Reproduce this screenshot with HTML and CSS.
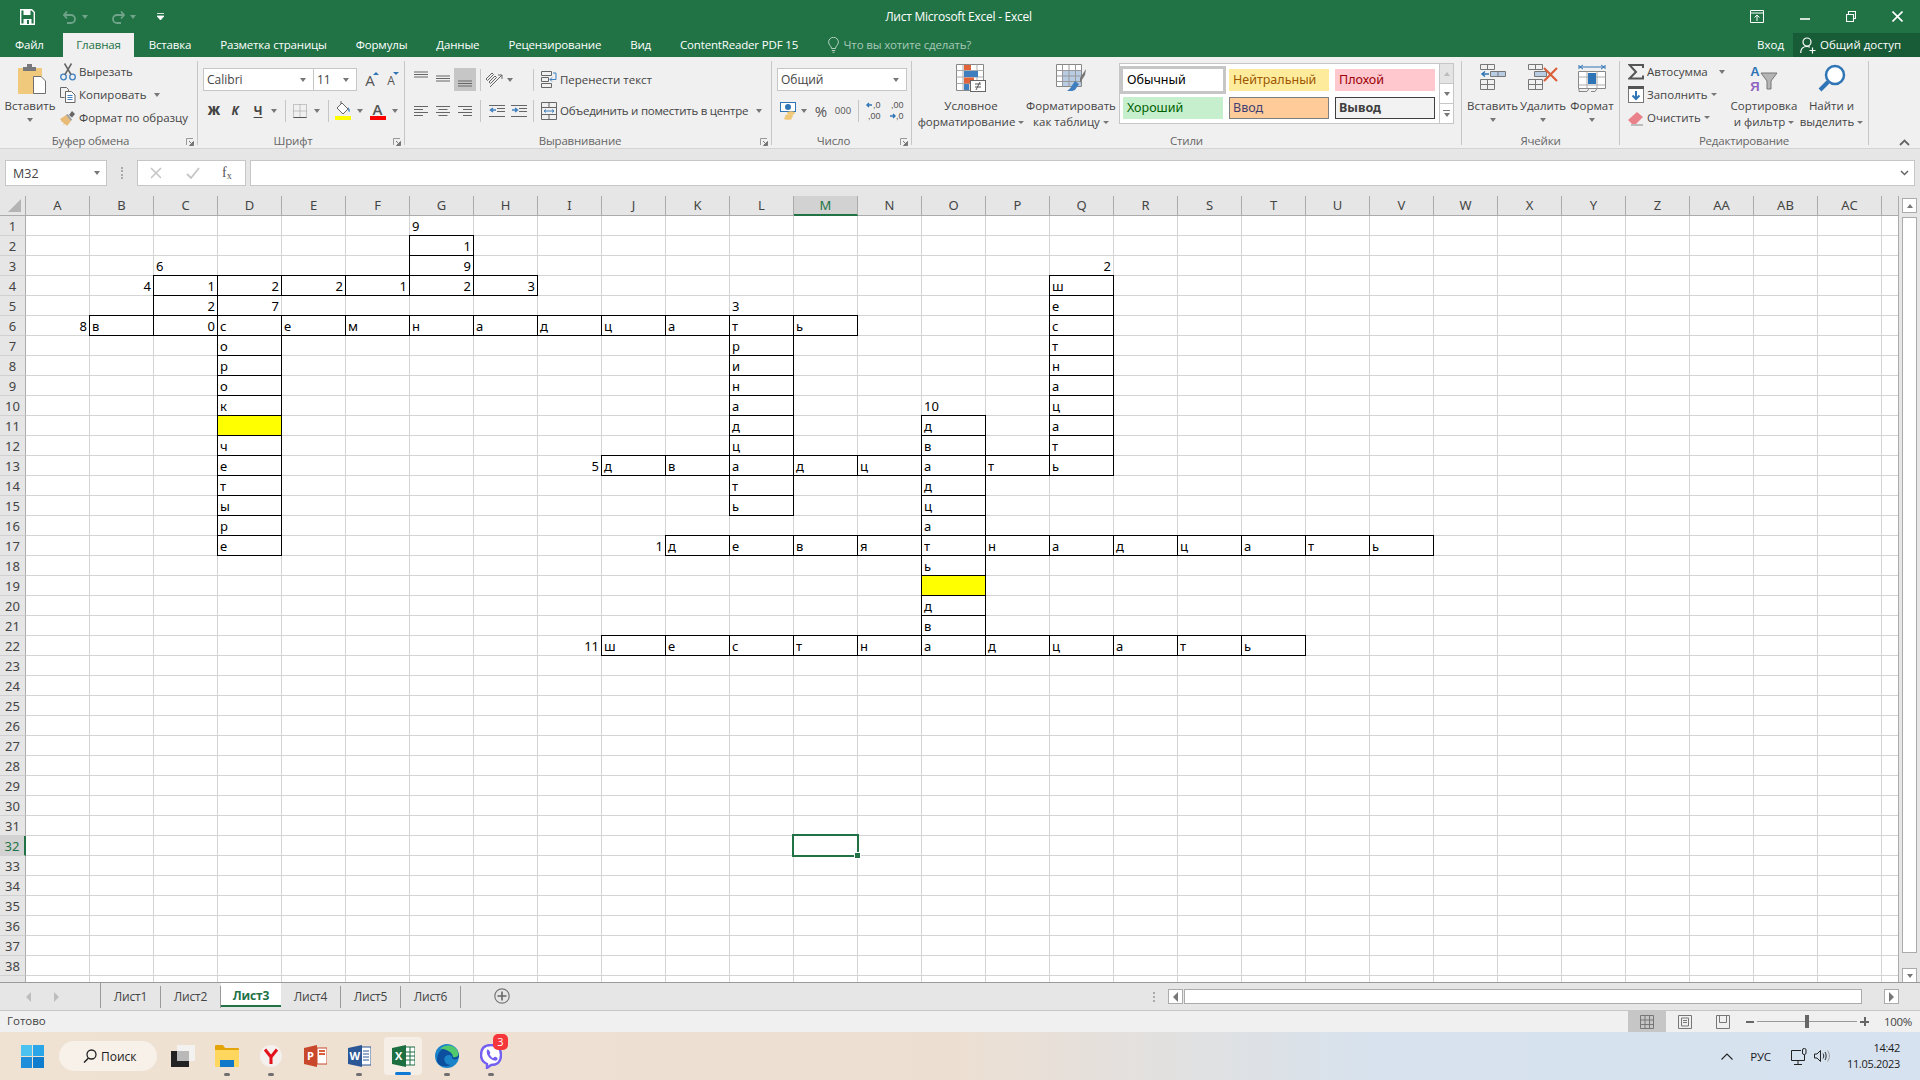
FILE: index.html
```html
<!DOCTYPE html>
<html lang="ru">
<head>
<meta charset="utf-8">
<title>Лист Microsoft Excel - Excel</title>
<link rel="stylesheet" href="styles.css">
</head>
<body>
<header class="titlebar">
  <div class="qat">
    <svg class="qat-save" width="15" height="16" viewBox="0 0 15 16"><path d="M.7.7h11l2.6 2.6v12H.7z" fill="none" stroke="#fff" stroke-width="1.4"/><rect x="3.5" y="1" width="7" height="5" fill="#fff"/><rect x="3.5" y="10" width="8" height="5" fill="#fff"/><rect x="7" y="11" width="2" height="4" fill="#217346"/></svg>
    <svg class="qat-undo" width="14" height="14" viewBox="0 0 14 14"><path d="M4 8.5 1 5l3-3.5M1.5 5H8a4 4 0 0 1 0 8H4" fill="none" stroke="#6fa48a" stroke-width="1.8"/></svg>
    <i class="caret dim"></i>
    <svg class="qat-redo" width="14" height="14" viewBox="0 0 14 14"><path d="M10 8.5 13 5l-3-3.5M12.5 5H6a4 4 0 0 0 0 8h4" fill="none" stroke="#6fa48a" stroke-width="1.8"/></svg>
    <i class="caret dim"></i>
    <svg class="qat-more" width="7" height="8" viewBox="0 0 7 8"><path d="M0 .5h7M0 3h7L3.500 7z" stroke="#fff" fill="#fff" stroke-width=".8"/></svg>
  </div>
  <div class="doc-title">Лист Microsoft Excel - Excel</div>
  <div class="win-buttons">
    <svg width="14" height="13" viewBox="0 0 14 13"><path d="M.5.500h13v12H.5zM.5 3h13M7 11V5.500M4.500 7.500 7 5l2.500 2.500" fill="none" stroke="#fff"/></svg>
    <svg width="10" height="10" viewBox="0 0 10 10"><path d="M0 7h10" stroke="#fff" stroke-width="1.600"/></svg>
    <svg width="10" height="11" viewBox="0 0 10 11"><path d="M.5 3.500h7v7h-7zM2.500 3V.5h7v7H8" fill="none" stroke="#fff" stroke-width="1.100"/></svg>
    <svg width="11" height="11" viewBox="0 0 11 11"><path d="m.5.500 10 10M10.500.5l-10 10" stroke="#fff" stroke-width="1.600"/></svg>
  </div>
</header>

<nav class="tabs">
  <a class="tab first">Файл</a>
  <a class="tab active">Главная</a>
  <a class="tab">Вставка</a>
  <a class="tab">Разметка страницы</a>
  <a class="tab">Формулы</a>
  <a class="tab">Данные</a>
  <a class="tab">Рецензирование</a>
  <a class="tab">Вид</a>
  <a class="tab">ContentReader PDF 15</a>
  <div class="tell">
    <svg width="11" height="16" viewBox="0 0 11 16"><path d="M3.500 11.500C3.500 9 .6 8 .6 5.200a4.900 4.900 0 0 1 9.800 0c0 2.800-2.900 3.800-2.900 6.300zM3.800 13.500h3.400M4.500 15.300h2" fill="none" stroke="#b5d0c1"/></svg>
    <span>Что вы хотите сделать?</span>
  </div>
  <div class="tabs-right">
    <span class="signin">Вход</span>
    <div class="share">
      <svg width="16" height="17" viewBox="0 0 16 17"><circle cx="7" cy="5" r="4" fill="none" stroke="#fff" stroke-width="1.200"/><path d="M.7 16c0-4 2.500-6.500 6.300-6.500 1 0 2 .2 2.800.6M12.500 10.500v6M9.500 13.500h6" fill="none" stroke="#fff" stroke-width="1.200"/></svg>
      <span>Общий доступ</span>
    </div>
  </div>
</nav>

<section class="ribbon">
  <div class="group g-clip">
    <div class="body">
      <div class="big w50">
        <div class="big-icon paste-icon">
          <svg width="28" height="30" viewBox="0 0 28 30"><rect y="4" width="24" height="26" rx="1" fill="#f1c97d"/><path d="M5 7V3h4V0h5v3h4v4z" fill="#77787b"/><path d="M15.500 12.500h7.500l4.500 4.500v12.500h-12z" fill="#fff" stroke="#6f6f6f"/></svg>
        </div>
        <span>Вставить</span>
        <i class="caret big-caret"></i>
      </div>
      <div class="small-col">
        <div class="small"><svg width="16" height="18" viewBox="0 0 16 18"><circle cx="3.500" cy="14" r="2.800" fill="none" stroke="#3f7fbf" stroke-width="1.300"/><circle cx="12.500" cy="14" r="2.800" fill="none" stroke="#3f7fbf" stroke-width="1.300"/><path d="M5 11.500 11.500.5M11 11.500 4.500.5" stroke="#666" stroke-width="1.500"/></svg><span>Вырезать</span></div>
        <div class="small"><svg width="16" height="16" viewBox="0 0 16 16"><path d="M.5.500h6l2 2v2M.5.500v10h4" fill="none" stroke="#666"/><path d="M5.500 4.500h6l3.500 3.500v7.500H5.500z" fill="#fff" stroke="#666"/><path d="M7.500 8.500h5M7.500 10.500h5M7.500 12.500h5" stroke="#3f7fbf"/></svg><span>Копировать</span><i class="caret copy-caret"></i></div>
        <div class="small"><svg width="16" height="16" viewBox="0 0 16 16"><path d="M0 9 6 5l5 6-4 5-2-2-2 1 1-2-2-1z" fill="#e8bb78"/><path d="m6 5 5 6 1-1.500L7.500 4z" fill="#999"/><path d="m9 5 3-4 3 3-3 3.500z" fill="#666"/></svg><span>Формат по образцу</span></div>
      </div>
    </div>
    <div class="label has-launcher">Буфер обмена<svg class="launcher" width="8" height="8" viewBox="0 0 8 8"><path d="M.5 7V.5H7" fill="none" stroke="#999"/><path d="M3 3l3.500 3.500M7.500 3.500v4h-4z" stroke="#777" fill="#777"/></svg></div>
  </div>

  <div class="group g-font">
    <div class="body stack">
      <div class="row">
        <div class="combo w111"><span>Calibri</span><i class="caret"></i></div>
        <div class="combo w44 joined"><span>11</span><i class="caret"></i></div>
        <div class="btn w20 ml3 grow-a"><span class="a-big">A</span><i class="mini-up"></i></div>
        <div class="btn w22 grow-a"><span class="a-small">A</span><i class="mini-down"></i></div>
      </div>
      <div class="row">
        <div class="btn w22 fx-bold">Ж</div>
        <div class="btn w20 fx-ital">К</div>
        <div class="btn w26 fx-under">Ч</div>
        <i class="caret"></i>
        <i class="vsep ml8"></i>
        <div class="btn w28"><svg width="14" height="14" viewBox="0 0 14 14"><path d="M.5.500h13v13H.5zM7 .5v13M.5 7h13" fill="none" stroke="#999" stroke-dasharray="1 1"/><path d="M.5 13.500h13" stroke="#555"/></svg></div>
        <i class="caret"></i>
        <i class="vsep ml8"></i>
        <div class="btn w28"><svg width="16" height="19" viewBox="0 0 16 19"><path d="M2 7 7 2l6 6-5 5z" fill="#fff" stroke="#666"/><path d="M6 3V0" stroke="#666"/><path d="M13 6c2 2 2 4 1.500 5-1 0-1.500-2-1.500-5z" fill="#3f7fbf"/><rect y="15" width="16" height="4" fill="#ff0"/></svg></div>
        <i class="caret"></i>
        <div class="btn w29 col-a"><span class="a-color">A</span><i class="red-bar"></i></div>
        <i class="caret"></i>
      </div>
    </div>
    <div class="label has-launcher">Шрифт<svg class="launcher" width="8" height="8" viewBox="0 0 8 8"><path d="M.5 7V.5H7" fill="none" stroke="#999"/><path d="M3 3l3.500 3.500M7.500 3.500v4h-4z" stroke="#777" fill="#777"/></svg></div>
  </div>

  <div class="group g-align">
    <div class="body stack pl5">
      <div class="row">
        <div class="btn w22"><svg width="14" height="23" viewBox="0 0 14 23"><path d="M0 4h14M0 6.500h14M0 9h14" stroke="#666"/></svg></div>
        <div class="btn w22"><svg width="14" height="23" viewBox="0 0 14 23"><path d="M0 8h14M0 10.500h14M0 13h14" stroke="#666"/></svg></div>
        <div class="btn w22 on"><svg width="14" height="23" viewBox="0 0 14 23"><path d="M0 13h14M0 15.500h14M0 18h14" stroke="#666"/></svg></div>
        <i class="vsep ml4"></i>
        <div class="btn w26"><svg width="18" height="16" viewBox="0 0 18 16"><path d="M1 7 7 1l1.500 1.500-6 6zM4 10l6-6 1.500 1.500-6 6zM5 15 17 3M13 3h4v4" fill="none" stroke="#666"/></svg></div>
        <i class="caret"></i>
        <i class="vsep ml20"></i>
        <div class="small ml7"><svg width="16" height="18" viewBox="0 0 16 18"><path d="M.5.500h10v4H.5zM.5 6.500h7v4h-7zM.5 12.500h10v4H.5z" fill="none" stroke="#666"/><path d="M12 2h3v6.500H9M11 6.500l-2 2 2 2" fill="none" stroke="#3f7fbf"/></svg><span>Перенести текст</span></div>
      </div>
      <div class="row">
        <div class="btn w22"><svg width="14" height="12" viewBox="0 0 14 12"><path d="M0 1.500h14M0 4.500h9M0 7.500h14M0 10.500h9" stroke="#666"/></svg></div>
        <div class="btn w22"><svg width="14" height="12" viewBox="0 0 14 12"><path d="M0 1.500h14M2.500 4.500h9M0 7.500h14M2.500 10.500h9" stroke="#666"/></svg></div>
        <div class="btn w22"><svg width="14" height="12" viewBox="0 0 14 12"><path d="M0 1.500h14M5 4.500h9M0 7.500h14M5 10.500h9" stroke="#666"/></svg></div>
        <i class="vsep ml4"></i>
        <div class="btn w22 ml5"><svg width="16" height="12" viewBox="0 0 16 12"><path d="M0 .5h16M8 3.500h8M8 6.500h8M0 11.500h16" stroke="#666"/><path d="M7 5H2M4 3 1.500 5 4 7" fill="none" stroke="#3f7fbf" stroke-width="1.500"/></svg></div>
        <div class="btn w22"><svg width="16" height="12" viewBox="0 0 16 12"><path d="M0 .5h16M8 3.500h8M8 6.500h8M0 11.500h16" stroke="#666"/><path d="M1 5h5M4 3l2.500 2L4 7" fill="none" stroke="#3f7fbf" stroke-width="1.500"/></svg></div>
        <i class="vsep ml3"></i>
        <div class="small ml7 merge"><svg width="16" height="18" viewBox="0 0 16 18"><path d="M.5.500h15v17H.5zM.5 5.500h15M.5 12.500h15M8 .5v5M8 12.500v5" fill="none" stroke="#666"/><path d="M3 9h10M5 7.500 3 9l2 1.500M11 7.500 13 9l-2 1.500" fill="none" stroke="#3f7fbf"/></svg><span class="merge-text">Объединить и поместить в центре</span><i class="caret merge-caret"></i></div>
      </div>
    </div>
    <div class="label has-launcher">Выравнивание<svg class="launcher" width="8" height="8" viewBox="0 0 8 8"><path d="M.5 7V.5H7" fill="none" stroke="#999"/><path d="M3 3l3.500 3.500M7.500 3.500v4h-4z" stroke="#777" fill="#777"/></svg></div>
  </div>

  <div class="group g-num">
    <div class="body stack pl5">
      <div class="row"><div class="combo w130"><span>Общий</span><i class="caret"></i></div></div>
      <div class="row">
        <div class="btn w22"><svg width="16" height="18" viewBox="0 0 16 18"><rect x=".5" y=".5" width="15" height="9" fill="#fff" stroke="#2f75b5"/><circle cx="8" cy="5" r="3" fill="#2f75b5"/><ellipse cx="11" cy="11" rx="4" ry="1.800" fill="#f0c878"/><ellipse cx="9" cy="14" rx="4" ry="1.800" fill="#f0c878"/><ellipse cx="8" cy="16.200" rx="4" ry="1.500" fill="#f0c878"/></svg></div>
        <i class="caret cw10"></i>
        <div class="btn w26 fx-pct">%</div>
        <div class="btn w18 fx-000">000</div>
        <i class="vsep ml6"></i>
        <div class="btn w28 dec">
          <div class="dec-row"><svg width="7" height="8" viewBox="0 0 7 8"><path d="M6 4H1M3 2 1 4l2 2" fill="none" stroke="#2f75b5" stroke-width="1.400"/></svg><span>,0</span></div>
          <div class="dec-row"><span>,00</span></div>
        </div>
        <div class="btn w18 dec">
          <div class="dec-row"><span>,00</span></div>
          <div class="dec-row"><svg width="7" height="8" viewBox="0 0 7 8"><path d="M1 4h5M4 2l2 2-2 2" fill="none" stroke="#2f75b5" stroke-width="1.400"/></svg><span>,0</span></div>
        </div>
      </div>
    </div>
    <div class="label has-launcher">Число<svg class="launcher" width="8" height="8" viewBox="0 0 8 8"><path d="M.5 7V.5H7" fill="none" stroke="#999"/><path d="M3 3l3.500 3.500M7.500 3.500v4h-4z" stroke="#777" fill="#777"/></svg></div>
  </div>

  <div class="group g-styles">
    <div class="body pl5">
      <div class="big w108">
        <div class="big-icon"><svg width="30" height="28" viewBox="0 0 30 28"><path d="M.5.500h27v26H.5z" fill="#fff" stroke="#888"/><path d="M7 .5v26M14 .5v26M21 .5v26M.5 6.500h27M.5 13h27M.5 19.500h27" stroke="#aaa"/><rect x="8" y="1" width="7" height="5" fill="#e0633a"/><rect x="8" y="7" width="14" height="6" fill="#3f7fbf"/><rect x="8" y="13.500" width="10" height="6" fill="#e0633a"/><rect x="8" y="20" width="5" height="6" fill="#3f7fbf"/><rect x="14.500" y="16.500" width="15" height="11" fill="#fff" stroke="#666"/><path d="M19 20h6M19 23h6M24 18l-4 8" stroke="#555"/></svg></div>
        <span class="ln">Условное</span>
        <span class="ln">форматирование<i class="caret tiny"></i></span>
      </div>
      <div class="big w92">
        <div class="big-icon"><svg width="31" height="28" viewBox="0 0 31 28"><path d="M.5.500h25v22H.5z" fill="#fff" stroke="#888"/><rect x="7" y="7" width="18" height="15" fill="#b8cce4"/><path d="M6.500.5v22M13 .5v22M19.500.5v22M.5 6.500h25M.5 12h25M.5 17.500h25" stroke="#999"/><path d="m24 14 6-9-1 6-5 8z" fill="#777"/><path d="m19 17 4 3-4 6c-3 1.500-7 1-8 1 3-2 4-4 6-7z" fill="#3f7fbf"/></svg></div>
        <span class="ln">Форматировать</span>
        <span class="ln">как таблицу<i class="caret tiny"></i></span>
      </div>
      <div class="gallery">
        <div class="g-cells">
          <div class="st st-normal">Обычный</div>
          <div class="st st-neutral">Нейтральный</div>
          <div class="st st-bad">Плохой</div>
          <div class="st st-good">Хороший</div>
          <div class="st st-input">Ввод</div>
          <div class="st st-output">Вывод</div>
        </div>
        <div class="g-scroll">
          <div class="g-btn off"><i class="caret up"></i></div>
          <div class="g-btn"><i class="caret"></i></div>
          <div class="g-btn more"><b></b><i class="caret"></i></div>
        </div>
      </div>
    </div>
    <div class="label">Стили</div>
  </div>

  <div class="group g-cells-group">
    <div class="body pl6">
      <div class="big w49">
        <div class="big-icon"><svg width="26" height="28" viewBox="0 0 26 28"><path d="M.5.500h14v5H.5zM7.500.5v5M.5 15.500h14v10H.5zM.5 20.500h14M7.500 15.500v10" fill="none" stroke="#777"/><path d="M9 10H2M5 7.500 2 10l3 2.500" fill="none" stroke="#2f75b5" stroke-width="1.500"/><path d="M10.500 7.500h15v5h-15zM18 7.500v5" fill="#b8cce4" stroke="#777"/></svg></div>
        <span class="ln">Вставить</span><i class="caret big-caret"></i>
      </div>
      <div class="big w52">
        <div class="big-icon"><svg width="30" height="28" viewBox="0 0 30 28"><path d="M.5.500h14v5H.5zM7.500.5v5M.5 15.500h14v10H.5zM.5 20.500h14M7.500 15.500v10" fill="none" stroke="#777"/><path d="M6.500 7.500h12v5h-12z" fill="#b8cce4" stroke="#777"/><path d="m16 4 13 13M29 4 16 17" stroke="#d9603b" stroke-width="2.200"/></svg></div>
        <span class="ln">Удалить</span><i class="caret big-caret"></i>
      </div>
      <div class="big w46">
        <div class="big-icon"><svg width="28" height="30" viewBox="0 0 28 30"><path d="M1 3h26M1 1v4M27 1v4M5 1 2 3l3 2M23 1l3 2-3 2" fill="none" stroke="#2f75b5"/><path d="M.5 7.500h27v17H.5z" fill="#fff" stroke="#888"/><path d="M9 7.500v17M19 7.500v17M.5 13h27M.5 21h27" stroke="#aaa"/><rect x="10" y="9" width="8" height="11" fill="#2f75b5"/><path d="M1 24.500v3h8l2-3M13 27.500h4l2-3" fill="none" stroke="#888"/></svg></div>
        <span class="ln">Формат</span><i class="caret big-caret"></i>
      </div>
    </div>
    <div class="label">Ячейки</div>
  </div>

  <div class="group g-edit">
    <div class="body pl8">
      <div class="small-col w105">
        <div class="small"><svg width="16" height="16" viewBox="0 0 16 16"><path d="M15 4V1H1.500l6.500 7-6.500 6.500H15v-3" fill="none" stroke="#555" stroke-width="2"/></svg><span>Автосумма</span><i class="caret sum-caret"></i></div>
        <div class="small"><svg width="16" height="17" viewBox="0 0 16 17"><rect x=".5" y=".5" width="15" height="16" fill="#fff" stroke="#777"/><rect y="0" width="16" height="3" fill="#555"/><path d="M8 5v8M4.500 9.500 8 13l3.500-3.500" fill="none" stroke="#2f75b5" stroke-width="2"/></svg><span>Заполнить</span><i class="caret tiny flush"></i></div>
        <div class="small"><svg width="16" height="16" viewBox="0 0 16 16"><path d="M0 10 9 2l6 5-7 7H4z" fill="#e9828a"/><path d="M3 15h12" stroke="#888"/></svg><span>Очистить</span><i class="caret tiny flush"></i></div>
      </div>
      <div class="big w62">
        <div class="big-icon sort-icon">
          <div class="sort-letters"><span class="sort-a">A</span><span class="sort-r">Я</span></div>
          <svg width="18" height="18" viewBox="0 0 18 18"><path d="M1 1h16l-6 8v8H7V9z" fill="#b5b5b5" stroke="#777"/></svg>
        </div>
        <span class="ln">Сортировка</span>
        <span class="ln">и фильтр<i class="caret tiny"></i></span>
      </div>
      <div class="big w73">
        <div class="big-icon"><svg width="28" height="30" viewBox="0 0 28 30"><circle cx="17" cy="11" r="9" fill="#fff" stroke="#2f75b5" stroke-width="2.500"/><path d="m10 18-8 8" stroke="#2f75b5" stroke-width="4"/></svg></div>
        <span class="ln">Найти и</span>
        <span class="ln">выделить<i class="caret tiny"></i></span>
      </div>
    </div>
    <div class="label">Редактирование</div>
  </div>

  <div class="collapse"><svg width="11" height="7" viewBox="0 0 11 7"><path d="m1 6 4.500-4.500L10 6" fill="none" stroke="#666" stroke-width="1.800"/></svg></div>
</section>

<section class="formula">
  <div class="namebox"><span>M32</span><i class="caret"></i></div>
  <div class="fdots"></div>
  <div class="fxbox">
    <svg width="12" height="12" viewBox="0 0 12 12"><path d="m1 1 10 10M11 1 1 11" stroke="#c6c6c6" stroke-width="1.600"/></svg>
    <svg width="14" height="12" viewBox="0 0 14 12"><path d="m1 7 4 4 8-10" fill="none" stroke="#c6c6c6" stroke-width="1.800"/></svg>
    <span class="fx"><i>f</i><i class="fx-sub">x</i></span>
  </div>
  <div class="finput"><svg width="9" height="6" viewBox="0 0 9 6"><path d="m1 1 3.500 3.500L8 1" fill="none" stroke="#666" stroke-width="1.500"/></svg></div>
</section>

<section class="sheet">
  <div class="grid-view"><div class="grid" id="grid"></div></div>
  <div class="vscroll">
    <div class="sb-btn"><i class="caret up"></i></div>
    <div class="sb-thumb"></div>
    <div class="sb-btn"><i class="caret"></i></div>
  </div>
</section>

<section class="sheetbar">
  <div class="nav"><i class="arr left"></i><i class="arr right"></i></div>
  <div class="sheet-tabs">
    <a class="stab">Лист1</a>
    <a class="stab">Лист2</a>
    <a class="stab on">Лист3</a>
    <a class="stab">Лист4</a>
    <a class="stab">Лист5</a>
    <a class="stab">Лист6</a>
  </div>
  <div class="addsheet"><svg width="16" height="16" viewBox="0 0 16 16"><circle cx="8" cy="8" r="7.200" fill="none" stroke="#777" stroke-width="1.200"/><path d="M8 3.500v9M3.500 8h9" stroke="#666" stroke-width="1.600"/></svg></div>
  <div class="hscroll">
    <div class="splitter"></div>
    <div class="sb-btn"><i class="arr left dark"></i></div>
    <div class="h-thumb"></div>
    <div class="h-track"></div>
    <div class="sb-btn"><i class="arr right dark"></i></div>
  </div>
</section>

<footer class="status">
  <span>Готово</span>
  <div class="status-right">
    <div class="view on"><svg width="14" height="14" viewBox="0 0 14 14"><path d="M.5.500h13v13H.5zM5 .5v13M9.500.5v13M.5 5h13M.5 9.500h13" fill="none" stroke="#777"/></svg></div>
    <div class="view"><svg width="14" height="14" viewBox="0 0 14 14"><path d="M.5.500h13v13H.5z" fill="none" stroke="#777"/><path d="M3.500 3h7v8h-7zM5 5.500h4M5 7.500h4" fill="none" stroke="#777"/></svg></div>
    <div class="view"><svg width="14" height="14" viewBox="0 0 14 14"><path d="M.5.500h13v13H.5zM3.500.5v7h7v-7" fill="none" stroke="#777"/></svg></div>
    <div class="zoom">
      <i class="z-minus"></i>
      <div class="z-track"><i class="z-thumb"></i></div>
      <i class="z-plus"></i>
      <span class="z-val">100%</span>
    </div>
  </div>
</footer>

<footer class="taskbar">
  <svg class="win" width="23" height="23" viewBox="0 0 23 23"><rect width="11" height="11" fill="#4cc2f1"/><rect x="12" width="11" height="11" fill="#2aa5e8"/><rect y="12" width="11" height="11" fill="#1e8edb"/><rect x="12" y="12" width="11" height="11" fill="#0f7ccd"/></svg>
  <div class="search">
    <svg width="14" height="14" viewBox="0 0 14 14"><circle cx="8.500" cy="5.500" r="4.500" fill="none" stroke="#222" stroke-width="1.300"/><path d="m5.500 9-4.500 4.500" stroke="#222" stroke-width="1.500"/></svg>
    <span>Поиск</span>
  </div>
  <div class="task"><svg width="24" height="22" viewBox="0 0 24 22"><rect y="6" width="18" height="16" fill="#222"/><rect x="6" width="18" height="16" fill="#f4f4f4" opacity=".9"/><rect x="6" y="6" width="12" height="10" fill="#b9b9b9"/></svg></div>
  <div class="task dot"><svg width="24" height="22" viewBox="0 0 24 22"><path d="M0 1a1 1 0 0 1 1-1h7l2 3h13a1 1 0 0 1 1 1v3H0z" fill="#e5a50a"/><path d="M0 5h24v16a1 1 0 0 1-1 1H1a1 1 0 0 1-1-1z" fill="#ffd75e"/><path d="M5 15h14v7H5z" fill="#0f78c8"/></svg></div>
  <div class="task dot"><svg width="22" height="22" viewBox="0 0 22 22"><circle cx="11" cy="11" r="11" fill="#f3f0ee"/><path d="M5 4.500 11 12l6-7.500M11 12v7" stroke="#e3111b" stroke-width="3" fill="none"/></svg></div>
  <div class="task"><svg width="23" height="22" viewBox="0 0 23 22"><path d="M0 3 13 0v22L0 19z" fill="#c9472a"/><rect x="13" y="3" width="10" height="16" fill="#fff" stroke="#c9472a"/><path d="M15 6h6M15 9h6" stroke="#d9603b" stroke-width="2"/><text x="3" y="15" class="tb-letter">P</text></svg></div>
  <div class="task dot"><svg width="23" height="22" viewBox="0 0 23 22"><rect x="13" y="2" width="10" height="18" fill="#fff" stroke="#2b5797"/><path d="M15 6h6M15 9h6M15 12h6M15 15h6" stroke="#2b5797"/><path d="M0 3 14 0v22L0 19z" fill="#2b5797"/><text x="1.500" y="15" class="tb-letter">W</text></svg></div>
  <div class="task active"><svg width="23" height="22" viewBox="0 0 23 22"><rect x="13" y="2" width="10" height="18" fill="#fff" stroke="#1d6f42"/><path d="M13 7h10M13 11h10M13 15h10M18 2v18" stroke="#1d6f42"/><path d="M0 3 14 0v22L0 19z" fill="#1d6f42"/><text x="3" y="15" class="tb-letter">X</text></svg><i class="active-bar"></i></div>
  <div class="task dot"><svg width="24" height="24" viewBox="0 0 24 24"><circle cx="12" cy="12" r="12" fill="#1b84c9"/><path d="M2 16C2 8 8 3 14 3c6 0 10 4 10 9 0 3-4 4-6 3-2-1 0-4-4-4-3 0-6 2-4 7 1 2 3 3 6 3C8 24 2 21 2 16z" fill="#0b4f9e"/><path d="M5 5c4-5 15-5 18 3 2 5-3 6-5 5 0-5-9-9-13-8z" fill="#53c96e"/></svg></div>
  <div class="task dot viber">
    <svg width="22" height="25" viewBox="0 0 22 25"><path d="M11 1c6 0 10 3 10 10s-4 10-10 10l-4 3v-4C3 18 1 15 1 11 1 4 5 1 11 1z" fill="#fff" stroke="#7360f2" stroke-width="2.400"/><path d="M7 6c1-1 2 0 3 2s-1 2 0 3 2 3 3 3 1-2 3-1 2 2 1 3-3 1-6-1-5-6-4-9z" fill="#7360f2"/></svg>
    <b class="badge">3</b>
  </div>
  <div class="tray">
    <svg class="tray-up" width="12" height="7" viewBox="0 0 12 7"><path d="m.5 6.500 5.500-5.500 5.500 5.500" fill="none" stroke="#222" stroke-width="1.100"/></svg>
    <span class="lang">РУС</span>
    <svg class="tray-net" width="16" height="17" viewBox="0 0 16 17"><path d="M10 2.500H.5v10h13V7M7 12.500V16M3 16.500h8" fill="none" stroke="#222"/><rect x="11.500" y=".5" width="3.500" height="6" rx="1.500" fill="none" stroke="#222"/></svg>
    <svg class="tray-vol" width="16" height="14" viewBox="0 0 16 14"><path d="M.5 5h2.500L6.500 1.500v11L3 9H.5zM9 4.500c1 1.500 1 3.500 0 5M11 3c1.500 2 1.500 6 0 8" fill="none" stroke="#222"/><path d="M13.500 1.500c2.500 3 2.500 8 0 11" fill="none" stroke="#999"/></svg>
    <div class="clock"><span>14:42</span><span>11.05.2023</span></div>
  </div>
</footer>
<script src="grid.js"></script>
</body>
</html>
```
FILE: styles.css
```css
*{box-sizing:border-box}
html,body{margin:0;padding:0}
body{width:1920px;height:1080px;overflow:hidden;display:flex;flex-direction:column;font-family:"Open Sans","Noto Sans",sans-serif;font-size:11.5px;color:#444;background:#f0f0f0}
svg{display:block;flex:none}
i{font-style:normal}

.titlebar{height:33px;background:#217346;display:flex;align-items:center;color:#fff}
.qat{flex:1;display:flex;align-items:center;padding-left:20px}
.qat-undo{margin-left:28px}
.qat-redo{margin-left:23px}
.caret.dim{border-top-color:#6fa48a;margin-left:5px}
.qat-more{margin-left:21px}
.doc-title{font-size:12px;letter-spacing:-.25px;width:148px;text-align:center;white-space:nowrap;margin-right:6px}
.win-buttons{flex:1;display:flex;align-items:center;justify-content:flex-end;gap:36px;padding-right:17px}

.tabs{height:24px;background:#217346;display:flex;color:#fff;font-size:11.5px;line-height:24px}
.tab{padding:0 14.5px;white-space:nowrap;letter-spacing:-.17px}
.tab.first{padding:0 15px;margin-right:4px}
.tab.active{background:#f0f0f0;color:#217346;padding:0 13.5px}
.tell{display:flex;align-items:center;gap:5px;color:#a9c9b8;margin-left:15px;letter-spacing:-.15px}
.tabs-right{margin-left:auto;display:flex;align-items:center}
.signin{margin-right:9px}
.share{width:127px;height:24px;background:#185c37;display:flex;align-items:center;gap:4px;padding-left:7px}

.caret{display:inline-block;width:0;height:0;flex:none;border-left:3.5px solid transparent;border-right:3.5px solid transparent;border-top:4px solid #777;vertical-align:middle}
.caret.up{border-top:0;border-bottom:4px solid #777}
.caret.tiny{border-left-width:3px;border-right-width:3px;border-top-width:3px;margin-left:3px}
.caret.tiny.flush{margin-left:0}
.cw10{margin:0 1.500px}

.ribbon{height:92px;padding-top:4px;background:#f0f0f0;border-bottom:1px solid #d4d4d4;display:flex;align-items:flex-start;white-space:nowrap}
.group{height:84px;border-right:1px solid #c6c6c6;display:flex;flex-direction:column;flex:none}
.g-clip{width:198px}
.g-font{width:207px}
.g-align{width:367px}
.g-num{width:140px}
.g-styles{width:550px}
.g-cells-group{width:158px}
.g-edit{width:249px}
.body{height:72px;display:flex;flex:none}
.stack{flex-direction:column;padding-top:7px;gap:8px}
.pl5{padding-left:5px}
.pl6{padding-left:6px}
.pl8{padding-left:8px}
.g-clip .body{padding-left:5px}
.g-font .body{padding-left:5px}
.row{height:23px;display:flex;align-items:center}
.label{height:16px;line-height:16px;text-align:center;color:#666;position:relative;flex:none;font-size:11.5px;letter-spacing:-.2px}
.has-launcher{padding-right:16px}
.launcher{position:absolute;right:3px;top:5px}
.collapse{flex:1;height:84px;display:flex;justify-content:flex-end;align-items:flex-end;padding:0 10px 0 0}
.collapse svg{margin-bottom:-1px}

.big{display:flex;flex-direction:column;align-items:center;flex:none;line-height:16px;text-align:center}
.big-icon{height:37px;padding-top:3px;display:flex;align-items:flex-start;justify-content:center;flex:none}
.paste-icon{padding-left:4px}
.big-caret{margin-top:4px}
.ln{display:block;white-space:nowrap}
.small-col{display:flex;flex-direction:column;margin:-1px 0 0 5px;flex:none}
.small{height:23px;display:flex;align-items:center;gap:3px;flex:none}
.copy-caret{margin-left:4px}
.sum-caret{margin-left:8px}
.merge{flex:1;padding-right:9px}
.merge-text{letter-spacing:-.25px}
.merge-caret{margin-left:auto}

.w18{width:18px}.w20{width:20px}.w22{width:22px}.w26{width:26px}.w28{width:28px}.w29{width:29px}
.w44{width:44px}.w46{width:46px}.w49{width:49px}.w50{width:50px}.w52{width:52px}.w62{width:62px}.w73{width:73px}.w92{width:92px}
.w105{width:105px;margin-left:0}.w108{width:108px}.w111{width:111px}.w130{width:130px}
.ml3{margin-left:3px}.ml4{margin-left:4px}.ml5{margin-left:5px}.ml6{margin-left:6px}.ml7{margin-left:7px}.ml8{margin-left:8px}.ml20{margin-left:20px}

.btn{height:23px;display:flex;align-items:center;justify-content:center;flex:none;position:relative}
.btn.on{background:#c6c6c6}
.vsep{width:1px;height:22px;background:#c6c6c6;flex:none}
.combo{height:23px;background:#fff;border:1px solid #c6c6c6;display:flex;align-items:center;justify-content:space-between;padding:0 7px 0 3px;font-size:12px;flex:none}
.joined{margin-left:-1px;width:44px}
.fx-bold{font-weight:800;font-size:12px}
.fx-ital{font-weight:700;font-style:italic;font-size:12px}
.fx-under{font-weight:700;font-size:12px;text-decoration:underline;text-underline-offset:2px}
.a-big{font-size:15px;color:#555}
.a-small{font-size:12px;color:#555;margin-top:2px}
.mini-up,.mini-down{position:absolute;top:4px;right:1px;width:0;height:0;border-left:3px solid transparent;border-right:3px solid transparent}
.mini-up{border-bottom:3px solid #2f75b5}
.mini-down{border-top:3px solid #2f75b5;right:3px}
.col-a{flex-direction:column}
.a-color{font-size:15px;line-height:14px;font-weight:600;color:#555}
.red-bar{width:16px;height:4px;background:#f00}
.fx-pct{font-size:15px;color:#555}
.fx-000{font-size:9.500px;color:#555}
.dec{flex-direction:column;font-family:"Liberation Sans",sans-serif;font-size:9px;line-height:10.500px;color:#555}
.dec-row{display:flex;align-items:center;justify-content:flex-end;width:15px;height:10.500px}
.sort-icon{gap:0;align-items:flex-start}
.sort-letters{display:flex;flex-direction:column}
.sort-a,.sort-r{font-size:13px;line-height:15px;font-weight:700;font-family:"Liberation Sans",sans-serif;display:block;height:15px}
.sort-a{color:#2f75b5}
.sort-r{color:#8e62c0}
.sort-icon svg{margin-top:8px}

.gallery{display:flex;margin:2px 0 0 2px;height:61px;width:335px;flex:none;border:1px solid #c6c6c6;background:#fff}
.g-cells{display:grid;grid-template-columns:100px 100px 100px;grid-template-rows:22px 22px;gap:6px;padding:5px 3px;width:319px;flex:none}
.st{font-family:"Noto Sans",sans-serif;font-size:12.500px;line-height:22px;padding-left:4px}
.st-normal{color:#000;outline:3px solid #c6c6c6;outline-offset:0}
.st-neutral{background:#ffeb9c;color:#9c5700}
.st-bad{background:#ffc7ce;color:#9c0006}
.st-good{background:#c6efce;color:#006100}
.st-input{background:#fc9;color:#3f3f76;border:1px solid #7f7f7f;line-height:20px;padding-left:3px}
.st-output{background:#f2f2f2;color:#3f3f3f;border:1px solid #3f3f3f;font-weight:700;line-height:20px;padding-left:3px}
.g-scroll{width:14px;flex:none;display:flex;flex-direction:column;background:#f0f0f0}
.g-btn{height:20px;flex:1;border-left:1px solid #c6c6c6;border-bottom:1px solid #c6c6c6;display:flex;flex-direction:column;align-items:center;justify-content:center;background:#fff}
.g-btn:last-child{border-bottom:0}
.g-btn.off{background:#e4e4e4}
.g-btn.off .caret{border-bottom-color:#bbb}
.g-btn b{display:block;width:7px;height:1px;background:#777;margin-bottom:2px}

.formula{height:47px;padding:11px 5px 10px;background:#e6e6e6;display:flex;flex:none}
.namebox{width:102px;height:26px;background:#fff;border:1px solid #c6c6c6;display:flex;align-items:center;justify-content:space-between;padding:0 6px 0 7px;font-size:12.500px;flex:none}
.fdots{width:2px;height:12px;margin:7px 14px 0 14px;border-left:2px dotted #aaa;flex:none}
.fxbox{width:109px;height:26px;background:#fff;border:1px solid #c6c6c6;display:flex;align-items:center;gap:24px;padding-left:12px;flex:none}
.fx{font-family:"Liberation Serif",serif;font-size:14px;font-style:italic;color:#555;margin-left:-2px;line-height:14px}
.fx-sub{font-size:10px;position:relative;top:2px}
.finput{flex:1;height:26px;margin-left:4px;background:#fff;border:1px solid #c6c6c6;display:flex;align-items:center;justify-content:flex-end;padding-right:5px}

.sheet{height:786px;display:flex;flex:none;background:#e6e6e6}
.grid-view{width:1899px;overflow:hidden;border-right:1px solid #ababab;background:#fff;flex:none}
.grid{display:grid;grid-template-columns:26px repeat(29,64px) 20px;grid-template-rows:repeat(40,20px);font-family:"Noto Sans",sans-serif;font-size:13px;color:#000}
.c{border-right:1px solid #d4d4d4;border-bottom:1px solid #d4d4d4;position:relative;padding:0 2px 0 2px;line-height:20px;white-space:nowrap;overflow:visible;background:#fff}
.c.num{text-align:right}
.c.box{z-index:1}
.c.box::after{content:"";position:absolute;inset:-1px -1px -1px -1px;border:1px solid #000;pointer-events:none}
.c.yellow{background:#ff0}
.c.sel{z-index:3}
.c.sel::after{content:"";position:absolute;inset:-2px -2px -2px -2px;border:2px solid #217346}
.c.sel::before{content:"";position:absolute;right:-4px;bottom:-4px;width:5px;height:5px;background:#217346;border:1px solid #fff;z-index:1}
.h{background:#e6e6e6;color:#444;text-align:center;font-size:13px;line-height:19px;border-right:1px solid #ababab;border-bottom:1px solid #ababab}
.h.rowh{border-right:1px solid #ababab;border-bottom:1px solid #d0d0d0;line-height:20px}
.h.corner{position:relative}
.h.corner::after{content:"";position:absolute;right:4px;bottom:3px;border-left:13px solid transparent;border-bottom:13px solid #b4b4b4}
.h.cur{background:#d2d2d2;color:#217346}
.h.curcol{border-bottom:2px solid #217346;line-height:18px}
.h.currow{border-right:2px solid #217346}

.vscroll{flex:1;display:flex;flex-direction:column;align-items:center;padding-top:2px;gap:1px}
.sb-btn{width:15px;height:15px;background:#fff;border:1px solid #ababab;display:flex;align-items:center;justify-content:center;flex:none}
.sb-thumb{width:15px;height:736px;background:#fff;border:1px solid #ababab;margin-top:3px;margin-bottom:14px;flex:none}

.sheetbar{height:28px;background:#e6e6e6;border-top:1px solid #9a9a9a;display:flex;align-items:flex-start;flex:none}
.nav{width:100px;height:27px;display:flex;align-items:center;padding-left:26px;gap:23px;flex:none}
.arr{display:block;width:0;height:0;border-top:5px solid transparent;border-bottom:5px solid transparent}
.arr.left{border-right:5px solid #bdbdbd}
.arr.right{border-left:5px solid #bdbdbd}
.arr.left.dark{border-right-color:#777}
.arr.right.dark{border-left-color:#777}
.sheet-tabs{display:flex;height:25px;margin-top:0;border-left:1px solid #9a9a9a;flex:none}
.stab{width:60px;height:22px;margin-top:3px;text-align:center;line-height:22px;font-size:12px;border-right:1px solid #9a9a9a;color:#444;letter-spacing:-.2px}
.stab.on{background:#fff;height:24px;margin-top:0;line-height:26px;border-right:0;border-bottom:2px solid #217346;color:#217346;font-weight:700;position:relative}
.addsheet{margin:5px 0 0 33px;flex:none}
.hscroll{margin-left:auto;width:767px;height:27px;display:flex;align-items:center;padding-right:21px;flex:none}
.splitter{width:2px;height:10px;margin-right:13px;border-left:2px dotted #aaa;flex:none}
.h-thumb{width:678px;height:15px;background:#fff;border:1px solid #ababab;margin-left:1px;flex:none}
.h-track{flex:1}

.status{height:22px;background:#f0f0f0;border-top:1px solid #c6c6c6;display:flex;align-items:center;padding-left:7px;flex:none;font-size:11.500px}
.status > span{margin-top:-2px}
.status-right{margin-left:auto;display:flex;align-items:center;height:21px}
.view{width:38px;height:21px;display:flex;align-items:center;justify-content:center}
.view.on{background:#c6c6c6}
.zoom{display:flex;align-items:center;width:178px;padding-left:4px}
.z-minus{width:8px;height:2px;background:#666;margin-right:3px;flex:none}
.z-track{width:100px;height:1px;background:#999;position:relative;flex:none}
.z-thumb{position:absolute;left:48px;top:-6px;width:4px;height:13px;background:#666}
.z-plus{width:9px;height:9px;margin-left:3px;flex:none;background:linear-gradient(#666,#666) center/9px 2px no-repeat,linear-gradient(#666,#666) center/2px 9px no-repeat}
.z-val{margin-left:15px;letter-spacing:-.3px;font-size:11.500px}

.taskbar{height:48px;flex:none;display:flex;align-items:center;padding-left:21px;color:#1c1c1c;background:linear-gradient(90deg,#f0e2d2 0,#ecdfd2 50%,#d7e2ee 72%,#d6e2ef 100%)}
.win{margin-right:15px}
.search{width:98px;height:30px;border-radius:15px;background:#f8f1ea;display:flex;align-items:center;padding-left:24px;gap:4px;font-size:12px;margin-right:4px;flex:none}
.task{width:44px;height:48px;display:flex;align-items:center;justify-content:center;position:relative;flex:none}
.task.dot::after{content:"";position:absolute;bottom:4px;left:19px;width:6px;height:3px;border-radius:2px;background:#707070}
.task.active{width:38px;height:38px;margin:0 3px;background:#f6efe8;border-radius:4px}
.active-bar{position:absolute;left:11px;bottom:0;width:16px;height:3px;border-radius:2px;background:#0f78d4}
.badge{position:absolute;top:2px;left:24px;width:15px;height:16px;border-radius:5px;background:#f5363a;color:#fff;font-weight:400;font-size:11px;line-height:16px;text-align:center}
.tb-letter{font:700 11px "Open Sans",sans-serif;fill:#fff}
.tray{margin-left:auto;display:flex;align-items:center;padding-right:20px;font-size:11.500px}
.tray-up{margin-right:17px}
.lang{margin-right:20px;letter-spacing:-.2px}
.tray-net{margin-right:7px}
.clock{display:flex;flex-direction:column;align-items:flex-end;margin-left:17px;line-height:16px;font-size:11px;letter-spacing:-.3px}
```
FILE: grid.js
```js
var LETTERS = "ABCDEFGHIJKLMNOPQRSTUVWXYZ";
var LAST_FULL_ROW = 38;
function colName(i) {
  return i < 26 ? LETTERS[i] : "A" + LETTERS[i - 26];
}
function colIndex(name) {
  for (var i = 0; i < 29; i++) if (colName(i) === name) return i;
  return -1;
}

var boxed = {};
function across(col, row, text) {
  var c = colIndex(col);
  for (var i = 0; i < text.length; i++) boxed[colName(c + i) + row] = text[i];
}
function down(col, row, text) {
  for (var i = 0; i < text.length; i++) boxed[col + (row + i)] = text[i];
}

down("G", 2, "19");
across("C", 4, "122123");
boxed.C5 = "2";
across("B", 6, "в0семнадцать");
down("D", 7, "орок четыре");
down("L", 7, "ринадцать");
down("Q", 4, "шестнацать");
down("O", 11, "двадцать два");
across("J", 13, "двадцать");
across("K", 17, "девятнадцать");
across("J", 22, "шестнадцать");

var plainLeft = { G1: "9", C3: "6", L5: "3", O10: "10" };
var plainRight = { Q3: "2", B4: "4", D5: "7", A6: "8", I13: "5", J17: "1", I22: "11" };

var grid = document.getElementById("grid");
var SEL_COL = 12, SEL_ROW = 32;

function add(cls, text) {
  var d = document.createElement("div");
  d.className = cls;
  if (text) d.textContent = text;
  grid.appendChild(d);
}

add("h corner");
for (var c = 0; c < 30; c++) {
  add("h" + (c === SEL_COL ? " cur curcol" : ""), c < 29 ? colName(c) : "");
}
for (var r = 1; r <= 39; r++) {
  add("h rowh" + (r === SEL_ROW ? " cur currow" : ""), r <= LAST_FULL_ROW ? String(r) : "");
  for (var k = 0; k < 30; k++) {
    var key = (k < 29 ? colName(k) : "AD") + r;
    var cls = "c", text = "";
    if (key in boxed) {
      cls += " box";
      text = boxed[key];
      if (text === " ") { cls += " yellow"; text = ""; }
      if (/[0-9]/.test(text)) cls += " num";
    } else if (key in plainLeft) {
      text = plainLeft[key];
    } else if (key in plainRight) {
      text = plainRight[key];
      cls += " num";
    }
    if (k === SEL_COL && r === SEL_ROW) cls += " sel";
    add(cls, text);
  }
}
```
